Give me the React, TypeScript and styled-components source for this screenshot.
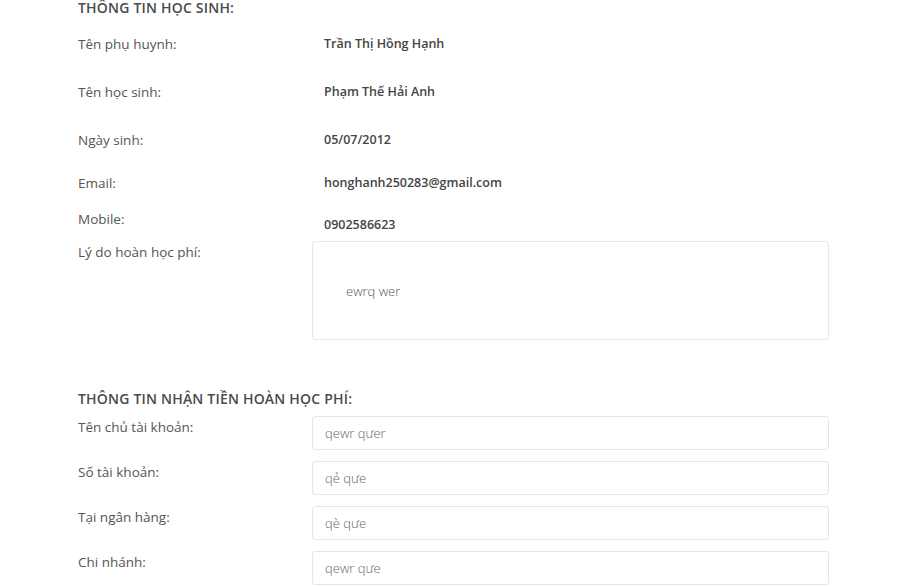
import React from "react";
import styled, { createGlobalStyle } from "styled-components";

const Global = createGlobalStyle`
  html, body { margin: 0; padding: 0; background: #fff; }
  body { font-family: "Open Sans", "Noto Sans", sans-serif; color: #555; }
`;

const Page = styled.div`
  width: 751px;
  padding-left: 78px;
  display: flex;
  flex-direction: column;
`;

const Title = styled.h3<{ $top?: number }>`
  margin: ${(p) => p.$top ?? 0}px 0 0 0;
  font-size: 14px;
  line-height: 16px;
  font-weight: 600;
  color: #4a4a4a;
  text-transform: uppercase;
  letter-spacing: 0.2px;
`;

const Row = styled.div<{ $h?: number; $mt?: number }>`
  display: grid;
  grid-template-columns: 234px 1fr;
  height: ${(p) => (p.$h ? `${p.$h}px` : "auto")};
  margin-top: ${(p) => p.$mt ?? 0}px;
  align-items: start;
`;

const Label = styled.div<{ $pt?: number }>`
  font-size: 13.5px;
  line-height: 20px;
  color: #555;
  padding-top: ${(p) => p.$pt ?? 0}px;
`;

const Value = styled.div<{ $pt?: number }>`
  font-size: 12.5px;
  line-height: 20px;
  font-weight: 600;
  color: #444;
  padding-left: 12px;
  padding-top: ${(p) => p.$pt ?? 0}px;
`;

const TextBox = styled.div`
  height: 99px;
  border: 1px solid #e8e8e8;
  border-radius: 3px;
  box-sizing: border-box;
  padding: 40px 33px;
  font-size: 13px;
  line-height: 18px;
  color: #555;
  font-weight: 300;
`;

const Input = styled.div`
  height: 34px;
  border: 1px solid #e6e6e6;
  border-radius: 3px;
  box-sizing: border-box;
  padding: 0 12px;
  display: flex;
  align-items: center;
  font-size: 13px;
  color: #666;
  font-weight: 300;
`;

const info: [string, string, number, number][] = [
  ["Tên phụ huynh:", "Trần Thị Hồng Hạnh", 48, 0],
  ["Tên học sinh:", "Phạm Thế Hải Anh", 48, 0],
  ["Ngày sinh:", "05/07/2012", 43, 0],
  ["Email:", "honghanh250283@gmail.com", 36, 0],
  ["Mobile:", "0902586623", 32, 7],
];

const bank: [string, string][] = [
  ["Tên chủ tài khoản:", "qewr qưer"],
  ["Số tài khoản:", "qẻ qưe"],
  ["Tại ngân hàng:", "qè qưe"],
  ["Chi nhánh:", "qewr qưe"],
];

export default function App() {
  return (
    <>
      <Global />
      <Page>
        <Title>Thông tin học sinh:</Title>
        <Row $mt={18} />
        {info.map(([l, v, h, off]) => (
          <Row key={l} $h={h}>
            <Label>{l}</Label>
            <Value $pt={off - 1}>{v}</Value>
          </Row>
        ))}
        <Row>
          <Label $pt={1}>Lý do hoàn học phí:</Label>
          <TextBox>ewrq wer</TextBox>
        </Row>
        <Title $top={51}>Thông tin nhận tiền hoàn học phí:</Title>
        {bank.map(([l, v], i) => (
          <Row key={l} $mt={i === 0 ? 9 : 11}>
            <Label $pt={1}>{l}</Label>
            <Input>{v}</Input>
          </Row>
        ))}
      </Page>
    </>
  );
}
